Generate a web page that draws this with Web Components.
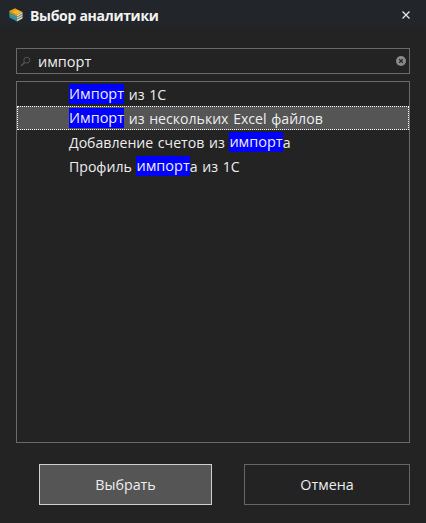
<!DOCTYPE html>
<html>
<head>
<meta charset="utf-8">
<title>Выбор аналитики</title>
<style>
html, body { margin: 0; height: 100%; background: #232323; }
body { font-family: "Open Sans", "Noto Sans", sans-serif; color: #eee; overflow: hidden; }
</style>
</head>
<body>
<template id="tpl-dialog">
  <style>
    :host { display: flex; flex-direction: column; width: 426px; height: 523px; background: #232323; box-sizing: border-box; }
    .body { flex: 1; display: flex; flex-direction: column; padding: 18px 16px 18px 16px; min-height: 0; }
    .list-wrap { flex: 1; margin-top: 7px; min-height: 0; display: flex; }
    .actions { display: flex; justify-content: flex-end; gap: 32px; margin-top: 21px; padding-left: 23px; }
  </style>
  <slot name="title"></slot>
  <div class="body">
    <slot name="search"></slot>
    <div class="list-wrap"><slot name="list"></slot></div>
    <div class="actions"><slot name="actions"></slot></div>
  </div>
</template>

<template id="tpl-titlebar">
  <style>
    :host { display: flex; align-items: center; height: 30px; background: linear-gradient(#22262b, #22252a 80%, #232323); padding: 0 16px 0 9px; font-size: 14px; font-weight: 700; color: #f2f2f2; letter-spacing: -0.3px; }
    .icon { width: 14px; height: 14px; margin-right: 7px; flex: none; }
    .text { flex: 1; }
    .close { width: 8px; height: 8px; flex: none; }
  </style>
  <svg class="icon" viewBox="0 0 14 14">
    <path d="M.5 3L8 7v6.5L.5 9.5z" fill="#2e86c8"/>
    <path d="M.5 5.6L8 9.6v1.6L.5 7.2z" fill="#4f9e3f"/>
    <path d="M.5 3L8 7v1.4L.5 4.4z" fill="#d98f16"/>
    <path d="M8 7l5.5-3v6.5L8 13.5z" fill="#dcdcd2"/>
    <path d="M8 8.6l5.5-3v1L8 9.6zM8 10.8l5.5-3v1L8 11.8z" fill="#6d7268"/>
    <path d="M.5 3L6 .5 13.5 4 8 7z" fill="#f0bb22"/>
    <path d="M.5 3L6 .5 8 1.5 3 4.3z" fill="#e39a1a"/>
  </svg>
  <span class="text"><slot></slot></span>
  <svg class="close" viewBox="0 0 8 8"><path d="M.5 .5l7 7M7.5 .5l-7 7" stroke="#e6e6e6" stroke-width="1.3" fill="none"/></svg>
</template>

<template id="tpl-search">
  <style>
    :host { display: flex; align-items: center; height: 26px; box-sizing: border-box; border: 1px solid #6a6a6a; padding: 0 3px 0 3px; font-size: 14.5px; color: #eee; }
    .glass { width: 11px; height: 11px; flex: none; margin-right: 7px; }
    .text { flex: 1; }
    .clear { width: 10px; height: 10px; flex: none; }
  </style>
  <svg class="glass" viewBox="0 0 11 11"><circle cx="6.8" cy="4.2" r="3" stroke="#555" stroke-width="1" fill="none"/><path d="M4.6 6.4L1 10" stroke="#555" stroke-width="1.4"/></svg>
  <span class="text"><slot></slot></span>
  <svg class="clear" viewBox="0 0 10 10"><circle cx="5" cy="5" r="5" fill="#8a8a8a"/><path d="M3.2 3.2l3.6 3.6M6.8 3.2l-3.6 3.6" stroke="#2a2a2a" stroke-width="1.3"/></svg>
</template>

<template id="tpl-list">
  <style>
    :host { display: block; flex: 1; box-sizing: border-box; border: 1px solid #6a6a6a; }
  </style>
  <slot></slot>
</template>

<template id="tpl-row">
  <style>
    :host { display: flex; align-items: center; height: 24px; box-sizing: border-box; padding-left: 52px; font-size: 14.1px; word-spacing: 1px; color: #eee; white-space: pre; }
    :host([selected]) { background: #555; outline: 1px dotted #fff; outline-offset: -1px; }
    ::slotted(mark) { background: #0000ff; color: #eee; display: inline-block; height: 20px; line-height: 19px; font-size: 14.5px; }
  </style>
  <slot></slot>
</template>

<template id="tpl-button">
  <style>
    :host { display: flex; align-items: center; justify-content: center; height: 41px; box-sizing: border-box; border: 1px solid #666; font-size: 14.3px; color: #eee; }
    :host([primary]) { background: #555; border-color: #d0d0d0; }
  </style>
  <slot></slot>
</template>

<app-dialog>
  <app-titlebar slot="title">Выбор аналитики</app-titlebar>
  <app-search slot="search">импорт</app-search>
  <app-list slot="list">
    <app-row><mark>Импорт</mark><span> из 1С</span></app-row>
    <app-row selected><mark>Импорт</mark><span> из нескольких Excel файлов</span></app-row>
    <app-row><span>Добавление счетов из </span><mark>импорт</mark><span>а</span></app-row>
    <app-row><span>Профиль </span><mark>импорт</mark><span>а из 1С</span></app-row>
  </app-list>
  <app-button slot="actions" primary style="width:173px">Выбрать</app-button>
  <app-button slot="actions" style="width:166px">Отмена</app-button>
</app-dialog>

<script>
function register(tag, tplId) {
  customElements.define(tag, class extends HTMLElement {
    constructor() {
      super();
      this.attachShadow({mode: 'open'});
      this.shadowRoot.appendChild(document.getElementById(tplId).content.cloneNode(true));
    }
  });
}
register('app-dialog', 'tpl-dialog');
register('app-titlebar', 'tpl-titlebar');
register('app-search', 'tpl-search');
register('app-list', 'tpl-list');
register('app-row', 'tpl-row');
register('app-button', 'tpl-button');
</script>
</body>
</html>
